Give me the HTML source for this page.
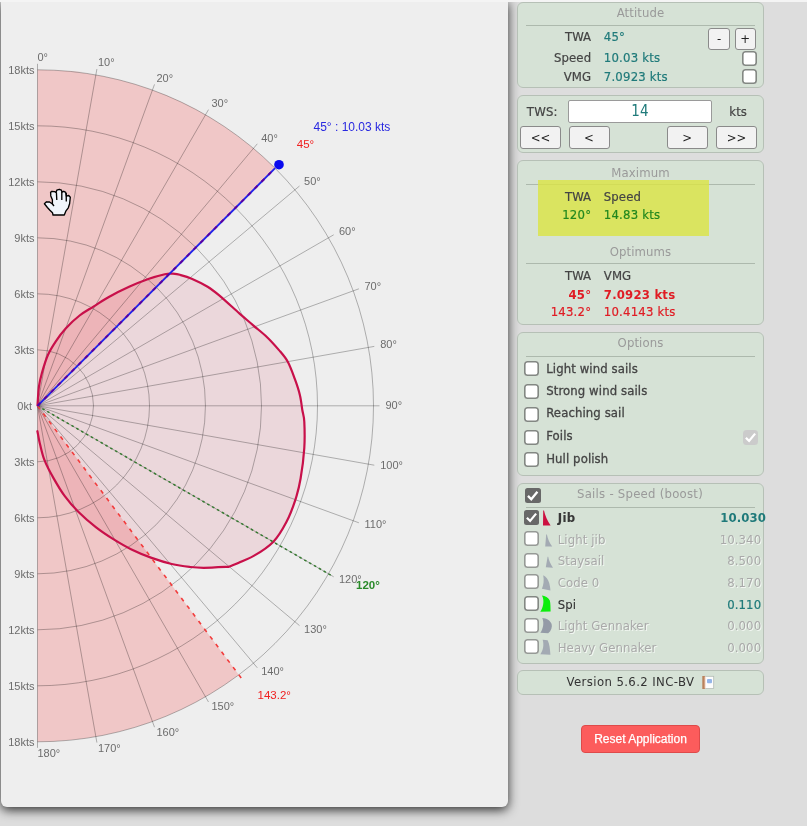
<!DOCTYPE html>
<html><head><meta charset="utf-8"><title>Polar</title>
<style>
*{box-sizing:border-box}
html,body{margin:0;padding:0}
#wrap{position:absolute;left:0;top:0;width:807px;height:826px;will-change:transform}
body{width:807px;height:826px;background:#ddd;position:relative;overflow:hidden;font-family:"DejaVu Sans Condensed","DejaVu Sans","Liberation Sans",sans-serif;font-size:13px;color:#444}
#left{position:absolute;left:1px;top:0;width:507.3px;height:806.8px;background:#eee;border-radius:0 0 6px 6px;box-shadow:0 3px 11px rgba(0,0,0,.8)}
#edge{display:none}
#topl{position:absolute;left:0;top:0;width:807px;height:2px;background:#f4f4f4}
.polar{position:absolute;left:0;top:0;font-family:"Liberation Sans",sans-serif}
.sec{fill:rgba(255,0,0,.16)}
.pfill{fill:rgba(220,20,60,.1)}
.grid{fill:none;stroke:rgba(0,0,0,.28);stroke-width:1}
.hand{fill:#f0f5fb;stroke:#000;stroke-width:1.35;stroke-linejoin:round}
.lab text{font-size:11px;fill:#6c6c6c}
.pline{fill:none;stroke:#c8104a;stroke-width:2.2;stroke-linejoin:round;stroke-linecap:round}
.gline{stroke:#357a30;stroke-width:1.5;stroke-dasharray:2.6 3;fill:none}
.rline{stroke:#f23c3c;stroke-width:1.6;stroke-dasharray:4 5.6;fill:none}
.bline{stroke:#2222e8;stroke-width:1.9;fill:none}
.rline2{stroke:#5a00a0;stroke-width:1.9;stroke-dasharray:4 5.6;fill:none}
.tb{font-size:12px;fill:#2828e0}
.tr{font-size:11.5px;fill:#f02020}
.tg{font-size:11.5px;fill:#2a8a2a;font-weight:bold}
.box{position:absolute;background:#d6e2d6;border:1px solid #b6c0b6;border-radius:6px}
.hr{position:absolute;height:1px;background:#adb9ad}
.t{position:absolute;line-height:16px;white-space:nowrap;letter-spacing:.1px;-webkit-text-stroke:.2px}
.c{width:200px;text-align:center}
.ttl{color:#9a9a9a;-webkit-text-stroke:0}
.teal{color:#1f7a7a}
.v{letter-spacing:.2px}
.grn{color:#22881e}
.red{color:#e01c24}
.b{font-weight:bold;-webkit-text-stroke:0}
.o{color:#444;-webkit-text-stroke:.3px}
.dk{color:#333;-webkit-text-stroke:.1px}
.dk.b{color:#383838}
.dis{color:#a9a9a9;text-shadow:1px 1px 0 #f2f7f2;-webkit-text-stroke:0}
.yl{position:absolute;background:rgba(218,228,70,.82)}
.inp{background:#fff;border:1px solid #9a9a9a;border-radius:2px;text-align:center;font-size:15px;line-height:21px;-webkit-text-stroke:0}
.btn{position:absolute;background:#f2f2f2;border:1px solid #8a8a8a;border-radius:3px;text-align:center;color:#222}
.cb{position:absolute;background:#fff;box-shadow:inset 0 0 0 1.6px #838883;border-radius:3.5px}
.cb.cd{box-shadow:inset 0 0 0 1.6px #969a96}
.cb.on{background:#686868;box-shadow:none;border-radius:2.5px}
.cb svg{display:block}
.reset{position:absolute;background:#fc5c5c;border:1px solid #de4a4a;border-radius:4px;color:#fff;font-family:"Liberation Sans",sans-serif;font-size:12px;text-align:center;-webkit-text-stroke:.25px}
</style></head><body>
<div id="wrap"><div id="left"></div><div id="edge"></div><div id="topl"></div>
<svg class="polar" width="508" height="807" viewBox="0 0 508 807">
<path class="sec" d="M37.5 405.8L37.5 69.8A336 336 0 0 1 275.1 168.2Z"/>
<path class="sec" d="M37.5 405.8L238.8 674.8A336 336 0 0 1 37.5 741.8Z"/>
<path class="pfill" d="M37.5 405.5C37.7 402.4 38.2 392.3 38.9 386.9C39.6 381.5 40.4 378.3 41.9 373C43.4 367.7 45.5 360.5 47.8 355.2C50.1 349.9 52.8 345.8 55.8 341.3C58.8 336.8 61.7 332.7 65.7 328.4C69.7 324.1 75 319.1 79.6 315.5C84.2 311.9 88.5 309.7 93.4 306.6C98.4 303.5 103.3 300 109.3 296.7C115.2 293.4 122.5 289.8 129.1 286.8C135.7 283.8 143.1 280.9 149 278.8C154.9 276.7 161 275.2 164.8 274.3C168.6 273.4 170.5 273.6 171.7 273.5C173 273.7 176.5 273.9 179.8 274.8C183.1 275.7 187.1 276.7 191.7 278.7C196.3 280.7 203 283.9 207.6 286.7C212.2 289.5 214.2 291.2 219.5 295.6C224.8 300.1 233.7 308.4 239.3 313.4C244.9 318.3 248.6 321.3 253.2 325.3C257.8 329.3 262.8 333.1 267.1 337.2C271.4 341.3 275.5 346 279 350.1C282.5 354.2 285.3 357.2 287.9 362C290.5 366.8 292.8 373.4 294.8 378.9C296.8 384.3 298.6 389.5 299.8 394.7C301.1 399.9 301.6 405.5 302.3 410C303.1 414.5 304 415.5 304.3 421.8C304.6 428.1 304.9 438.6 304.3 448C303.7 457.4 302.1 469.8 300.6 478.5C299.1 487.2 297.6 493.1 295.2 500.3C292.8 507.6 290 515.1 286.4 522C282.8 528.9 278.8 536.1 273.4 541.7C267.9 547.4 261.1 551.7 253.7 555.9C246.2 560.1 232.9 565 228.7 566.8C224.5 567 210.1 567.8 203.6 567.8C197.1 567.8 194.8 567.5 189.5 566.9C184.2 566.3 178 565.5 171.7 564C165.4 562.5 158.3 560.3 151.6 557.9C144.9 555.5 137.8 552.6 131.5 549.5C125.2 546.4 119.7 543.1 113.7 539.4C107.8 535.7 101.8 531.8 95.8 527.1C89.8 522.5 83.2 516.7 78 511.5C72.8 506.3 68.7 501.5 64.6 495.9C60.5 490.3 56.9 484.1 53.5 478.1C50.1 472.2 46.7 465.8 44.5 460.2C42.3 454.6 41.3 449.4 40.1 444.6C38.9 439.8 37.9 433.4 37.4 431.2 Z"/>
<path class="grid" d="M37.5 349.8A56 56 0 0 1 37.5 461.8M37.5 293.8A112 112 0 0 1 37.5 517.8M37.5 237.8A168 168 0 0 1 37.5 573.8M37.5 181.8A224 224 0 0 1 37.5 629.8M37.5 125.8A280 280 0 0 1 37.5 685.8M37.5 69.8A336 336 0 0 1 37.5 741.8M37.5 405.8L37.5 63.8M37.5 405.8L96.9 69M37.5 405.8L154.5 84.4M37.5 405.8L208.5 109.6M37.5 405.8L257.3 143.8M37.5 405.8L299.5 186M37.5 405.8L333.7 234.8M37.5 405.8L358.9 288.8M37.5 405.8L374.3 346.4M37.5 405.8L379.5 405.8M37.5 405.8L374.3 465.2M37.5 405.8L358.9 522.8M37.5 405.8L333.7 576.8M37.5 405.8L299.5 625.6M37.5 405.8L257.3 667.8M37.5 405.8L208.5 702M37.5 405.8L154.5 727.2M37.5 405.8L96.9 742.6M37.5 405.8L37.5 747.8"/>
<g class="lab">
<text x="37.5" y="60.8">0°</text>
<text x="97.9" y="66.1">10°</text>
<text x="156.5" y="81.8">20°</text>
<text x="211.5" y="107.4">30°</text>
<text x="261.2" y="142.2">40°</text>
<text x="304.1" y="185.1">50°</text>
<text x="338.9" y="234.8">60°</text>
<text x="364.5" y="289.8">70°</text>
<text x="380.2" y="348.4">80°</text>
<text x="385.5" y="408.8">90°</text>
<text x="380.2" y="469.2">100°</text>
<text x="364.5" y="527.8">110°</text>
<text x="338.9" y="582.8">120°</text>
<text x="304.1" y="632.5">130°</text>
<text x="261.2" y="675.4">140°</text>
<text x="211.5" y="710.2">150°</text>
<text x="156.5" y="735.8">160°</text>
<text x="97.9" y="751.5">170°</text>
<text x="37.5" y="756.8">180°</text>
</g><g class="lab" text-anchor="end">
<text x="32" y="409.8">0kt</text>
<text x="34.5" y="353.8">3kts</text>
<text x="34.5" y="465.8">3kts</text>
<text x="34.5" y="297.8">6kts</text>
<text x="34.5" y="521.8">6kts</text>
<text x="34.5" y="241.8">9kts</text>
<text x="34.5" y="577.8">9kts</text>
<text x="34.5" y="185.8">12kts</text>
<text x="34.5" y="633.8">12kts</text>
<text x="34.5" y="129.8">15kts</text>
<text x="34.5" y="689.8">15kts</text>
<text x="34.5" y="73.8">18kts</text>
<text x="34.5" y="745.8">18kts</text>
</g>
<path class="pline" d="M37.5 405.5C37.7 402.4 38.2 392.3 38.9 386.9C39.6 381.5 40.4 378.3 41.9 373C43.4 367.7 45.5 360.5 47.8 355.2C50.1 349.9 52.8 345.8 55.8 341.3C58.8 336.8 61.7 332.7 65.7 328.4C69.7 324.1 75 319.1 79.6 315.5C84.2 311.9 88.5 309.7 93.4 306.6C98.4 303.5 103.3 300 109.3 296.7C115.2 293.4 122.5 289.8 129.1 286.8C135.7 283.8 143.1 280.9 149 278.8C154.9 276.7 161 275.2 164.8 274.3C168.6 273.4 170.5 273.6 171.7 273.5C173 273.7 176.5 273.9 179.8 274.8C183.1 275.7 187.1 276.7 191.7 278.7C196.3 280.7 203 283.9 207.6 286.7C212.2 289.5 214.2 291.2 219.5 295.6C224.8 300.1 233.7 308.4 239.3 313.4C244.9 318.3 248.6 321.3 253.2 325.3C257.8 329.3 262.8 333.1 267.1 337.2C271.4 341.3 275.5 346 279 350.1C282.5 354.2 285.3 357.2 287.9 362C290.5 366.8 292.8 373.4 294.8 378.9C296.8 384.3 298.6 389.5 299.8 394.7C301.1 399.9 301.6 405.5 302.3 410C303.1 414.5 304 415.5 304.3 421.8C304.6 428.1 304.9 438.6 304.3 448C303.7 457.4 302.1 469.8 300.6 478.5C299.1 487.2 297.6 493.1 295.2 500.3C292.8 507.6 290 515.1 286.4 522C282.8 528.9 278.8 536.1 273.4 541.7C267.9 547.4 261.1 551.7 253.7 555.9C246.2 560.1 232.9 565 228.7 566.8C224.5 567 210.1 567.8 203.6 567.8C197.1 567.8 194.8 567.5 189.5 566.9C184.2 566.3 178 565.5 171.7 564C165.4 562.5 158.3 560.3 151.6 557.9C144.9 555.5 137.8 552.6 131.5 549.5C125.2 546.4 119.7 543.1 113.7 539.4C107.8 535.7 101.8 531.8 95.8 527.1C89.8 522.5 83.2 516.7 78 511.5C72.8 506.3 68.7 501.5 64.6 495.9C60.5 490.3 56.9 484.1 53.5 478.1C50.1 472.2 46.7 465.8 44.5 460.2C42.3 454.6 41.3 449.4 40.1 444.6C38.9 439.8 37.9 433.4 37.4 431.2"/>
<path class="gline" d="M37.5 405.8L331.9 575.8"/>
<path class="rline" d="M37.5 405.8L241.2 678"/>
<path class="bline" d="M37.5 405.8L275.1 168.2"/>
<path class="rline2" d="M37.5 405.8L275.1 168.2"/>
<circle cx="279" cy="164.7" r="4.8" fill="#0a0aee"/>
<svg x="40" y="180" width="40" height="40" viewBox="0 0 40 40"><path class="hand" d="M4.4 23.8L6.5 21.8L9.6 22L12.4 24L12.4 19.8L10.8 15.9L10.6 12.4L12 11.3L14.6 11.6L16 12.4L16.8 10.2L19.3 9.3L21.4 10.2L22 12L23.8 11.3L25.7 12.3L26.4 16.2L28.7 15.5L30.3 17.3L29.6 23.8L28.3 27.8L25.8 31.2L24.3 35L13 35L12.5 32.7L9.9 30.2L7.4 27.5Z"/><path class="hand" style="fill:none" d="M16.4 12.2L16.8 20M21.8 11.8L21.8 20M26.2 13L26.3 21.5M12.4 24L14 26"/></svg>
<text class="tb" x="313.5" y="131">45° : 10.03 kts</text>
<text class="tr" x="296.8" y="147.5">45°</text>
<text class="tr" x="257.5" y="699">143.2°</text>
<text class="tg" x="356" y="588.7">120°</text>
</svg>
<div class="box" style="left:517px;top:2px;width:247px;height:86px"></div>
<div class="t c ttl" style="left:540.5px;top:5.10px;">Attitude</div>
<div class="hr" style="left:525.5px;top:25px;width:229.5px"></div>
<div class="t " style="right:215.8px;top:29.20px;">TWA</div>
<div class="t teal v" style="left:603.8px;top:29.20px;">45°</div>
<div class="t " style="right:215.8px;top:50.00px;">Speed</div>
<div class="t teal v" style="left:603.8px;top:50.00px;">10.03 kts</div>
<div class="t " style="right:215.8px;top:69.10px;">VMG</div>
<div class="t teal v" style="left:603.8px;top:69.10px;">7.0923 kts</div>
<div class="btn" style="left:708px;top:27.5px;width:22px;height:22px;line-height:20px;">-</div>
<div class="btn" style="left:734.5px;top:27.5px;width:21.5px;height:22px;line-height:20px;">+</div>
<div class="cb " style="left:742.4px;top:50.9px;width:15px;height:15px;"></div>
<div class="cb " style="left:742.4px;top:69.4px;width:15px;height:15px;"></div>
<div class="box" style="left:517px;top:95px;width:247px;height:58px"></div>
<div class="t v" style="left:526.8px;top:103.90px;">TWS:</div>
<div class="t teal inp" style="left:568px;top:100px;width:144px;height:22.5px;">14</div>
<div class="t " style="left:729.3px;top:103.90px;">kts</div>
<div class="btn" style="left:520px;top:126px;width:41px;height:23px;line-height:21px;">&lt;&lt;</div>
<div class="btn" style="left:568.5px;top:126px;width:41px;height:23px;line-height:21px;">&lt;</div>
<div class="btn" style="left:666.5px;top:126px;width:41.5px;height:23px;line-height:21px;">&gt;</div>
<div class="btn" style="left:716px;top:126px;width:41px;height:23px;line-height:21px;">&gt;&gt;</div>
<div class="box" style="left:517px;top:160px;width:247px;height:164.5px"></div>
<div class="t c ttl" style="left:540.5px;top:164.90px;">Maximum</div>
<div class="hr" style="left:525.5px;top:184px;width:229.5px"></div>
<div class="yl" style="left:537.5px;top:180px;width:171.5px;height:55.5px"></div>
<div class="t " style="right:215.8px;top:188.90px;">TWA</div>
<div class="t " style="left:603.8px;top:188.90px;">Speed</div>
<div class="t grn v" style="right:215.8px;top:206.70px;">120°</div>
<div class="t grn v" style="left:603.8px;top:206.70px;">14.83 kts</div>
<div class="t c ttl" style="left:540.5px;top:244.10px;">Optimums</div>
<div class="hr" style="left:525.5px;top:263.3px;width:229.5px"></div>
<div class="t " style="right:215.8px;top:267.50px;">TWA</div>
<div class="t " style="left:603.8px;top:267.50px;">VMG</div>
<div class="t red b v" style="right:215.8px;top:286.60px;">45°</div>
<div class="t red b v" style="left:603.8px;top:286.60px;">7.0923 kts</div>
<div class="t red v" style="right:215.8px;top:304.40px;">143.2°</div>
<div class="t red v" style="left:603.8px;top:304.40px;">10.4143 kts</div>
<div class="box" style="left:517px;top:332px;width:247px;height:144px"></div>
<div class="t c ttl" style="left:540.5px;top:335.40px;">Options</div>
<div class="hr" style="left:525.5px;top:355.8px;width:229.5px"></div>
<div class="cb " style="left:524px;top:361.1px;width:15px;height:15px;"></div>
<div class="t o" style="left:546.2px;top:360.60px;">Light wind sails</div>
<div class="cb " style="left:524px;top:383.7px;width:15px;height:15px;"></div>
<div class="t o" style="left:546.2px;top:382.60px;">Strong wind sails</div>
<div class="cb " style="left:524px;top:406.9px;width:15px;height:15px;"></div>
<div class="t o" style="left:546.2px;top:405.30px;">Reaching sail</div>
<div class="cb " style="left:524px;top:429.6px;width:15px;height:15px;"></div>
<div class="t o" style="left:546.2px;top:428.20px;">Foils</div>
<div class="cb " style="left:524px;top:452.2px;width:15px;height:15px;"></div>
<div class="t o" style="left:546.2px;top:450.80px;">Hull polish</div>
<div class="cb" style="left:742.5px;top:430px;width:15px;height:15px;background:#cbcbcb;box-shadow:none"><svg width="100%" height="100%" viewBox="0 0 14 14"><path d="M2.7 7.2l3 3 5.6-6.8" fill="none" stroke="#fff" stroke-width="2.1"/></svg></div>
<div class="box" style="left:517px;top:482.5px;width:247px;height:181.5px"></div>
<div class="cb  on" style="left:525.4px;top:487.6px;width:15.4px;height:15.4px;"><svg width="100%" height="100%" viewBox="0 0 14 14"><path d="M2.7 7.2l3 3 5.6-6.8" fill="none" stroke="#fff" stroke-width="2.1"/></svg></div>
<div class="t c ttl" style="left:540px;top:486.30px;letter-spacing:.25px">Sails - Speed (boost)</div>
<div class="hr" style="left:525.5px;top:506.7px;width:229.5px"></div>
<svg style="position:absolute;left:536px;top:506px" width="24" height="154" viewBox="536 506 24 154"><path fill="#cc1040" d="M543.2 510.4L544 510.4C545 515.5 547.6 520.8 550.6 525.4L543 525.6Z"/><path fill="#a3aab3" d="M546.2 534.4L546.9 534.4C547.6 538.6 549.6 542.6 552.2 546.6L545.2 546.6Z"/><path fill="#a3aab3" d="M547.6 556.8L548.2 556.8C548.8 560.6 550.6 564.2 553 567.7L545.8 567.3Z"/><path fill="#a3aab3" d="M543.2 575.2C546 576.4 548.2 579.6 549.2 583C550 586 550.3 588.5 550.4 590.4L541.9 588.7C543.6 585 544.2 580 543.2 575.2Z"/><path fill="#0cee0c" d="M541.9 595.5C545 595.6 548.4 597.6 549.8 600.6C550.6 603 550.5 608 550.6 611.6L540.3 611.8C542.8 608 545 601 541.9 595.5Z"/><path fill="#949ba7" d="M542.3 617.9C546.5 618 550.4 620.4 551.6 624C552.4 627 551.4 630.6 548.2 633.3L540.3 632.8C543 629 544.4 623 542.3 617.9Z"/><path fill="#a3aab3" d="M542.7 639.7L547.6 640.2C549.6 643.6 550 649 550.4 654.7L540.3 654.2C543 650.6 544.2 645 542.7 639.7Z"/></svg>
<div class="cb  on" style="left:524px;top:509.8px;width:15px;height:15px;"><svg width="100%" height="100%" viewBox="0 0 14 14"><path d="M2.7 7.2l3 3 5.6-6.8" fill="none" stroke="#fff" stroke-width="2.1"/></svg></div>
<div class="t dk b" style="left:557.7px;top:510.30px;letter-spacing:.4px">Jib</div>
<div class="t teal b" style="right:41px;top:510.30px;">10.030</div>
<div class="cb cd" style="left:524px;top:531.2px;width:15px;height:15px;"></div>
<div class="t dis" style="left:557.7px;top:531.80px;">Light jib</div>
<div class="t dis" style="right:45.8px;top:531.80px;">10.340</div>
<div class="cb cd" style="left:524px;top:552.6px;width:15px;height:15px;"></div>
<div class="t dis" style="left:557.7px;top:553.10px;">Staysail</div>
<div class="t dis" style="right:45.8px;top:553.10px;">8.500</div>
<div class="cb cd" style="left:524px;top:574.3px;width:15px;height:15px;"></div>
<div class="t dis" style="left:557.7px;top:575.10px;">Code 0</div>
<div class="t dis" style="right:45.8px;top:575.10px;">8.170</div>
<div class="cb " style="left:524px;top:595.6px;width:15px;height:15px;"></div>
<div class="t dk" style="left:557.7px;top:596.80px;">Spi</div>
<div class="t teal" style="right:45.8px;top:596.80px;">0.110</div>
<div class="cb cd" style="left:524px;top:617.7px;width:15px;height:15px;"></div>
<div class="t dis" style="left:557.7px;top:618.20px;">Light Gennaker</div>
<div class="t dis" style="right:45.8px;top:618.20px;">0.000</div>
<div class="cb cd" style="left:524px;top:639px;width:15px;height:15px;"></div>
<div class="t dis" style="left:557.7px;top:639.50px;">Heavy Gennaker</div>
<div class="t dis" style="right:45.8px;top:639.50px;">0.000</div>
<div class="box" style="left:517px;top:670px;width:247px;height:24.5px"></div>
<div class="t dk" style="left:566.6px;top:674.10px;letter-spacing:.4px;-webkit-text-stroke:0">Version 5.6.2 INC-BV</div>
<svg style="position:absolute;left:700px;top:674px" width="16" height="17" viewBox="700 674 16 17"><rect x="704.4" y="676.3" width="9.3" height="12.3" fill="#fcfcfc" stroke="#b4bcb6" stroke-width=".8"/><rect x="702.3" y="676" width="2.7" height="13" fill="#b9825c"/><rect x="704.6" y="676.6" width="1" height="11.8" fill="#f3d3c2"/><rect x="707" y="679" width="5" height="4.3" rx="1" fill="#94b5e8"/></svg>
<div class="reset" style="left:581px;top:725px;width:119px;height:28px;line-height:26px">Reset Application</div>
</div></body></html>
